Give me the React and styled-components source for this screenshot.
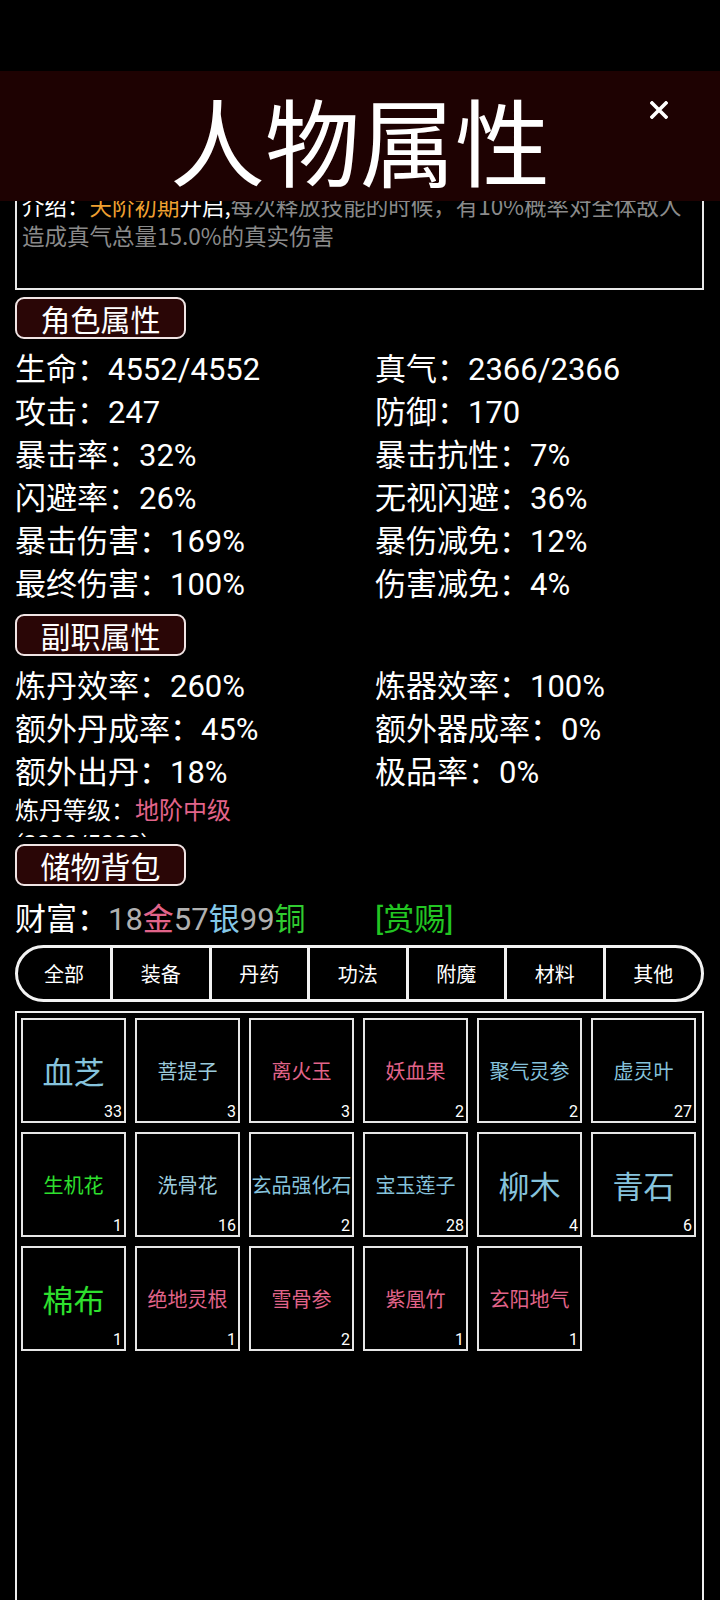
import React from "react";
import styled, { createGlobalStyle } from "styled-components";

const GlobalStyle = createGlobalStyle`
  html, body { margin: 0; padding: 0; background: #000; }
  body { font-family: Roboto, "Noto Sans CJK SC", sans-serif; color: #fff; }
  * { box-sizing: border-box; }
`;

const BLUE = "#86c3dc";
const PINK = "#e2648a";
const GREEN = "#2ee02e";

const Page = styled.div`
  position: relative;
  width: 720px;
  height: 1600px;
  overflow: hidden;
  background: #000;
  padding-top: 71px;
`;

const Header = styled.header`
  position: absolute;
  top: 71px;
  left: 0;
  right: 0;
  height: 130px;
  background: #1e0202;
  display: flex;
  align-items: center;
  justify-content: center;
  z-index: 2;
`;

const Title = styled.h1`
  margin: 0;
  padding-top: 5px;
  font-family: "Noto Sans CJK SC", sans-serif;
  font-weight: 400;
  font-size: 95px;
  line-height: 1;
  color: #fff;
`;

const CloseButton = styled.button`
  position: absolute;
  top: 29px;
  right: 51px;
  width: 20px;
  height: 20px;
  padding: 0;
  border: 0;
  background: transparent;
  display: flex;
  align-items: center;
  justify-content: center;
`;

const Content = styled.main`
  padding: 0 16px 0 15px;
  display: flex;
  flex-direction: column;
`;

const DescPanel = styled.section`
  height: 219px;
  border: 2px solid #e8e8e8;
  padding: 117px 4px 0 5px;
  font-family: "Noto Sans CJK SC", sans-serif;
  font-size: 22.5px;
  line-height: 30px;
  white-space: nowrap;
  color: #8a8a8a;
`;

const Tone = styled.span`
  color: ${(p) => p.$c};
`;

const Tag = styled.div`
  margin-top: ${(p) => p.$mt || 7}px;
  width: 171px;
  height: 42px;
  border: 2px solid #f0e4e4;
  border-radius: 9px;
  background: #2a0606;
  display: flex;
  align-items: center;
  justify-content: center;
  font-family: "Noto Sans CJK SC", sans-serif;
  font-size: 30px;
  line-height: 1;
  color: #fff;
`;

const StatGrid = styled.div`
  margin-top: 6px;
  display: grid;
  grid-template-columns: 360px 1fr;
  grid-auto-rows: 43px;
`;

const Stat = styled.div`
  display: flex;
  align-items: center;
  font-size: 31px;
  white-space: nowrap;
  color: #fff;
`;

const SubInfo = styled.div`
  height: 46px;
  overflow: hidden;
  font-size: 24px;
  line-height: 33px;
  padding-top: 4px;
  color: #fff;
`;

const WealthRow = styled.div`
  margin-top: 8px;
  height: 43px;
  display: grid;
  grid-template-columns: 360px 1fr;
  align-items: center;
  font-size: 31px;
  white-space: nowrap;
`;

const Tabs = styled.nav`
  margin-top: 8px;
  height: 57px;
  border: 3px solid #f2f2f2;
  border-radius: 29px;
  overflow: hidden;
  display: grid;
  grid-template-columns: 92px repeat(6, 1fr);
`;

const Tab = styled.div`
  display: flex;
  align-items: center;
  justify-content: center;
  font-family: "Noto Sans CJK SC", sans-serif;
  font-size: 20px;
  color: #fff;
  border-left: ${(p) => (p.$first ? "0" : "3px solid #f2f2f2")};
`;

const Bag = styled.section`
  margin-top: 9px;
  height: 620px;
  border: 2px solid #eeeeee;
  padding: 5px 4px;
  display: grid;
  grid-template-columns: repeat(6, 105px);
  grid-auto-rows: 105px;
  gap: 9px;
  align-content: start;
`;

const Cell = styled.div`
  position: relative;
  border: 2px solid #e6e6e6;
  display: flex;
  align-items: center;
  justify-content: center;
`;

const ItemName = styled.span`
  font-family: "Noto Sans CJK SC", sans-serif;
  font-size: ${(p) => p.$size}px;
  line-height: 1;
  white-space: nowrap;
  color: ${(p) => p.$c};
`;

const Count = styled.span`
  position: absolute;
  right: 2px;
  bottom: 1px;
  font-family: Roboto, sans-serif;
  font-size: 16px;
  line-height: 1;
  color: #fff;
`;

const mainStats = [
  ["生命", "4552/4552"],
  ["真气", "2366/2366"],
  ["攻击", "247"],
  ["防御", "170"],
  ["暴击率", "32%"],
  ["暴击抗性", "7%"],
  ["闪避率", "26%"],
  ["无视闪避", "36%"],
  ["暴击伤害", "169%"],
  ["暴伤减免", "12%"],
  ["最终伤害", "100%"],
  ["伤害减免", "4%"],
];

const subStats = [
  ["炼丹效率", "260%"],
  ["炼器效率", "100%"],
  ["额外丹成率", "45%"],
  ["额外器成率", "0%"],
  ["额外出丹", "18%"],
  ["极品率", "0%"],
];

const tabs = ["全部", "装备", "丹药", "功法", "附魔", "材料", "其他"];

const items = [
  ["血芝", 33, BLUE],
  ["菩提子", 3, "#9ccadb"],
  ["离火玉", 3, PINK],
  ["妖血果", 2, PINK],
  ["聚气灵参", 2, BLUE],
  ["虚灵叶", 27, BLUE],
  ["生机花", 1, GREEN],
  ["洗骨花", 16, "#9ccadb"],
  ["玄品强化石", 2, BLUE],
  ["宝玉莲子", 28, BLUE],
  ["柳木", 4, BLUE],
  ["青石", 6, BLUE],
  ["棉布", 1, GREEN],
  ["绝地灵根", 1, PINK],
  ["雪骨参", 2, PINK],
  ["紫凰竹", 1, PINK],
  ["玄阳地气", 1, PINK],
];

function CloseIcon() {
  return (
    <svg width="18" height="18" viewBox="0 0 18 18">
      <path d="M2 2 L16 16 M16 2 L2 16" stroke="#fff" strokeWidth="3.6" strokeLinecap="square" />
    </svg>
  );
}

export default function App() {
  return (
    <Page>
      <GlobalStyle />
      <Header>
        <Title>人物属性</Title>
        <CloseButton aria-label="关闭">
          <CloseIcon />
        </CloseButton>
      </Header>
      <Content>
        <DescPanel>
          <Tone $c="#fff">介绍：</Tone>
          <Tone $c="#f0a030">天阶初期</Tone>
          <Tone $c="#fff">开启,</Tone>
          每次释放技能的时候，有10%概率对全体敌人
          <br />
          造成真气总量15.0%的真实伤害
        </DescPanel>

        <Tag>角色属性</Tag>
        <StatGrid>
          {mainStats.map(([k, v]) => (
            <Stat key={k}>
              {k}：{v}
            </Stat>
          ))}
        </StatGrid>

        <Tag $mt={11}>副职属性</Tag>
        <StatGrid>
          {subStats.map(([k, v]) => (
            <Stat key={k}>
              {k}：{v}
            </Stat>
          ))}
        </StatGrid>
        <SubInfo>
          炼丹等级：<Tone $c={PINK}>地阶中级</Tone>
          <br />
          (2020/5000)
        </SubInfo>

        <Tag>储物背包</Tag>
        <WealthRow>
          <span>
            财富：<Tone $c="#b0b0b0">18</Tone>
            <Tone $c={PINK}>金</Tone>
            <Tone $c="#b0b0b0">57</Tone>
            <Tone $c="#84c8e8">银</Tone>
            <Tone $c="#b0b0b0">99</Tone>
            <Tone $c="#30cc30">铜</Tone>
          </span>
          <Tone $c="#22c522">[赏赐]</Tone>
        </WealthRow>

        <Tabs>
          {tabs.map((t, i) => (
            <Tab key={t} $first={i === 0}>
              {t}
            </Tab>
          ))}
        </Tabs>

        <Bag>
          {items.map(([name, n, c]) => (
            <Cell key={name}>
              <ItemName $c={c} $size={name.length === 2 ? 31 : 20}>
                {name}
              </ItemName>
              <Count>{n}</Count>
            </Cell>
          ))}
        </Bag>
      </Content>
    </Page>
  );
}
